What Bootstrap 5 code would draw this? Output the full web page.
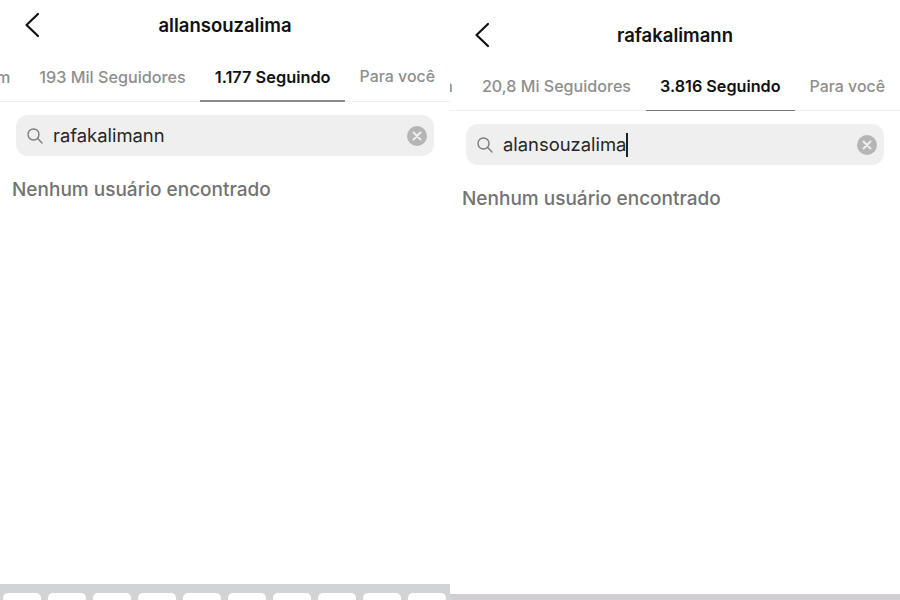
<!DOCTYPE html>
<html lang="pt-BR">
<head>
  <meta charset="UTF-8">
  <title>Seguindo</title>
  <link href="https://cdn.jsdelivr.net/npm/bootstrap@5.3.3/dist/css/bootstrap.min.css" rel="stylesheet">
  <style>
    html, body { height: 600px; overflow: hidden; }
    body { font-family: Inter, "Liberation Sans", sans-serif; background: #fff; }
    .shot { width: 450px; height: 600px; }
    .shot-top { height: 52px; flex-shrink: 0; }
    .shot-right .shot-top { height: 62px; padding-top: 10px; }
    .back-btn { left: 22px; top: 11px; line-height: 0; }
    .shot-right .back-btn { top: 21px; }
    .user-title { font-size: 18.5px; font-weight: 600; color: #111; }
    .tab-row { height: 50px; flex-shrink: 0; box-shadow: inset 0 -1px 0 #efefef; }
    .shot-right .tab-row { height: 49px; }
    .tab-item { flex-shrink: 0; padding: 0 14.5px; font-size: 16.2px; font-weight: 500; color: #8e8e8e; white-space: nowrap; display: flex; align-items: center; }
    .shot-right .tab-item { font-size: 16.1px; }
    .tab-item:last-child, .shot-right .tab-item:last-child { font-size: 15.9px; padding-right: 15px; }
    .tab-item.on { color: #111; font-weight: 600; font-size: 16.35px; box-shadow: inset 0 -2px 0 #8a8a8a; }
    .shot-right .tab-item.on { font-size: 16.2px; box-shadow: inset 0 -1px 0 #777; }
    .search-box { margin: 13px 16px 0; height: 41px; background: #efefef; border-radius: 12px; padding: 0 7px 0 10px; }
    .search-text { font-size: 18.4px; color: #262626; margin-left: 9px; }
    .caret-bar { display: inline-block; width: 1.5px; height: 24px; background: #222; vertical-align: -6px; }
    .empty-msg { margin: 20px 12px 0; font-size: 19px; font-weight: 500; color: #737373; }
    .kb-strip { height: 16px; background: #d2d3d5; padding: 9px 0 0 3px; gap: 6.7px; }
    .kb-key { width: 38.3px; height: 20px; flex-shrink: 0; background: #fff; border-radius: 5px; }
    .shot-right .kb-strip { height: 6px; padding: 0; background: #d0ced3; }
  </style>
</head>
<body>

<div class="d-flex">
  <!-- esquerda -->
  <div class="shot d-flex flex-column overflow-hidden">
    <div class="shot-top position-relative d-flex justify-content-center align-items-center">
      <span class="back-btn position-absolute">
        <svg width="18" height="28" viewBox="0 0 18 28" fill="none" stroke="#111" stroke-width="2.2" stroke-linecap="round" stroke-linejoin="round"><path d="M16 3 4.5 14 16 25"/></svg>
      </span>
      <span class="user-title">allansouzalima</span>
    </div>
    <div class="tab-row d-flex justify-content-end overflow-hidden">
      <div class="tab-item">Em comum</div>
      <div class="tab-item">193 Mil Seguidores</div>
      <div class="tab-item on">1.177 Seguindo</div>
      <div class="tab-item">Para você</div>
    </div>
    <div class="search-box d-flex align-items-center">
      <svg width="18" height="18" viewBox="0 0 18 18" fill="none" stroke="#7d7d7d" stroke-width="1.4" stroke-linecap="round"><circle cx="7.5" cy="7.5" r="5.5"/><path d="m11.6 11.6 4.4 4.4"/></svg>
      <span class="search-text flex-grow-1">rafakalimann</span>
      <svg width="20" height="20" viewBox="0 0 20 20"><circle cx="10" cy="10" r="10" fill="#b5b5b5"/><path d="m6.5 6.5 7 7m0-7-7 7" stroke="#efefef" stroke-width="2" stroke-linecap="round"/></svg>
    </div>
    <div class="empty-msg">Nenhum usuário encontrado</div>
    <div class="flex-grow-1"></div>
    <div class="kb-strip d-flex overflow-hidden">
      <div class="kb-key"></div><div class="kb-key"></div><div class="kb-key"></div><div class="kb-key"></div><div class="kb-key"></div>
      <div class="kb-key"></div><div class="kb-key"></div><div class="kb-key"></div><div class="kb-key"></div><div class="kb-key"></div>
    </div>
  </div>

  <!-- direita -->
  <div class="shot shot-right d-flex flex-column overflow-hidden">
    <div class="shot-top position-relative d-flex justify-content-center align-items-center">
      <span class="back-btn position-absolute">
        <svg width="18" height="28" viewBox="0 0 18 28" fill="none" stroke="#111" stroke-width="2.2" stroke-linecap="round" stroke-linejoin="round"><path d="M16 3 4.5 14 16 25"/></svg>
      </span>
      <span class="user-title">rafakalimann</span>
    </div>
    <div class="tab-row d-flex justify-content-end overflow-hidden">
      <div class="tab-item">Em comum</div>
      <div class="tab-item">20,8 Mi Seguidores</div>
      <div class="tab-item on">3.816 Seguindo</div>
      <div class="tab-item">Para você</div>
    </div>
    <div class="search-box d-flex align-items-center">
      <svg width="18" height="18" viewBox="0 0 18 18" fill="none" stroke="#7d7d7d" stroke-width="1.4" stroke-linecap="round"><circle cx="7.5" cy="7.5" r="5.5"/><path d="m11.6 11.6 4.4 4.4"/></svg>
      <span class="search-text flex-grow-1">alansouzalima<span class="caret-bar"></span></span>
      <svg width="20" height="20" viewBox="0 0 20 20"><circle cx="10" cy="10" r="10" fill="#b5b5b5"/><path d="m6.5 6.5 7 7m0-7-7 7" stroke="#efefef" stroke-width="2" stroke-linecap="round"/></svg>
    </div>
    <div class="empty-msg">Nenhum usuário encontrado</div>
    <div class="flex-grow-1"></div>
    <div class="kb-strip"></div>
  </div>
</div>

<script src="https://cdn.jsdelivr.net/npm/bootstrap@5.3.3/dist/js/bootstrap.bundle.min.js"></script>
</body>
</html>
